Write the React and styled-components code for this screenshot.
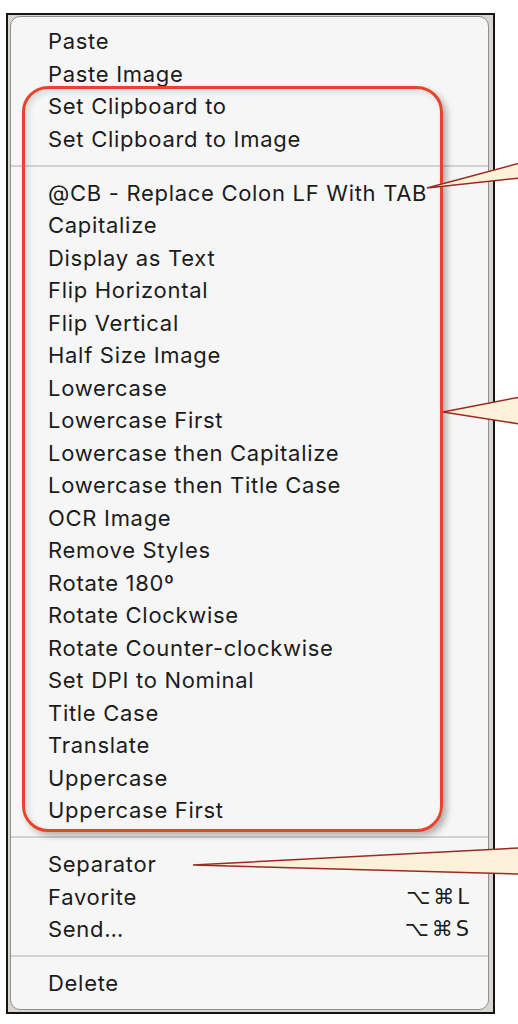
import React from "react";
import styled, { createGlobalStyle } from "styled-components";

const GlobalStyle = createGlobalStyle`
  html, body {
    margin: 0;
    padding: 0;
    background: #ffffff;
  }
  body {
    font-family: Inter, "Liberation Sans", "DejaVu Sans", sans-serif;
  }
`;

const Page = styled.div`
  position: relative;
  width: 518px;
  height: 1024px;
  overflow: hidden;
  padding: 13px 0 0 6px;
  box-sizing: border-box;
`;

const Frame = styled.div`
  width: 489px;
  box-sizing: border-box;
  border: 2px solid #141414;
  background: #d9d6d2;
  padding: 1px 4px 2px 2px;
`;

const Menu = styled.div`
  position: relative;
  box-sizing: border-box;
  border: 1px solid #8f8f8f;
  border-radius: 10px;
  background: #f6f6f6;
  padding: 8px 0 9px;
  display: flex;
  flex-direction: column;
`;

const Item = styled.div`
  height: 32.5px;
  display: flex;
  align-items: center;
  justify-content: space-between;
  padding: 0 19px 0 37px;
  font-size: 22px;
  letter-spacing: 0.7px;
  color: #1c1c1c;
  white-space: nowrap;
`;

const Shortcut = styled.span`
  font-family: "DejaVu Sans", sans-serif;
  font-size: 21px;
  letter-spacing: 3px;
  margin-right: -3px;
  color: #1c1c1c;
`;

const Separator = styled.div`
  height: 21.5px;
  display: flex;
  align-items: center;
  &::after {
    content: "";
    flex: 1;
    height: 2px;
    background: #d2d2d2;
  }
`;

const Highlight = styled.div`
  position: absolute;
  left: 11px;
  top: 69px;
  width: 421px;
  height: 746px;
  box-sizing: border-box;
  border: 3px solid #e6452c;
  border-radius: 26px;
  box-shadow: 4px 4px 6px rgba(0, 0, 0, 0.28), inset 3px 3px 6px rgba(0, 0, 0, 0.12);
  pointer-events: none;
`;

const Callouts = styled.svg`
  position: absolute;
  left: 0;
  top: 0;
  pointer-events: none;
`;

const groups = [
  [{ label: "Paste" }, { label: "Paste Image" }, { label: "Set Clipboard to" }, { label: "Set Clipboard to Image" }],
  [
    { label: "@CB - Replace Colon LF With TAB" },
    { label: "Capitalize" },
    { label: "Display as Text" },
    { label: "Flip Horizontal" },
    { label: "Flip Vertical" },
    { label: "Half Size Image" },
    { label: "Lowercase" },
    { label: "Lowercase First" },
    { label: "Lowercase then Capitalize" },
    { label: "Lowercase then Title Case" },
    { label: "OCR Image" },
    { label: "Remove Styles" },
    { label: "Rotate 180º" },
    { label: "Rotate Clockwise" },
    { label: "Rotate Counter-clockwise" },
    { label: "Set DPI to Nominal" },
    { label: "Title Case" },
    { label: "Translate" },
    { label: "Uppercase" },
    { label: "Uppercase First" },
  ],
  [{ label: "Separator" }, { label: "Favorite", keys: "⌥⌘L" }, { label: "Send…", keys: "⌥⌘S" }],
  [{ label: "Delete" }],
];

const App = () => {
  return (
    <>
      <GlobalStyle />
      <Page>
        <Frame>
          <Menu>
            {groups.map((group, gi) => (
              <React.Fragment key={gi}>
                {gi > 0 && <Separator />}
                {group.map((item) => (
                  <Item key={item.label}>
                    <span>{item.label}</span>
                    {item.keys && <Shortcut>{item.keys}</Shortcut>}
                  </Item>
                ))}
              </React.Fragment>
            ))}
            <Highlight />
          </Menu>
        </Frame>
        <Callouts width="518" height="1024" viewBox="0 0 518 1024">
          <g fill="#fdf1da" stroke="#9a2b22" strokeWidth="1.5" strokeLinejoin="miter">
            <polygon points="427,188 520,163 520,178" />
            <polygon points="443,412 520,397 520,424" />
            <polygon points="193,865 520,848 520,874" />
          </g>
        </Callouts>
      </Page>
    </>
  );
};

export default App;
